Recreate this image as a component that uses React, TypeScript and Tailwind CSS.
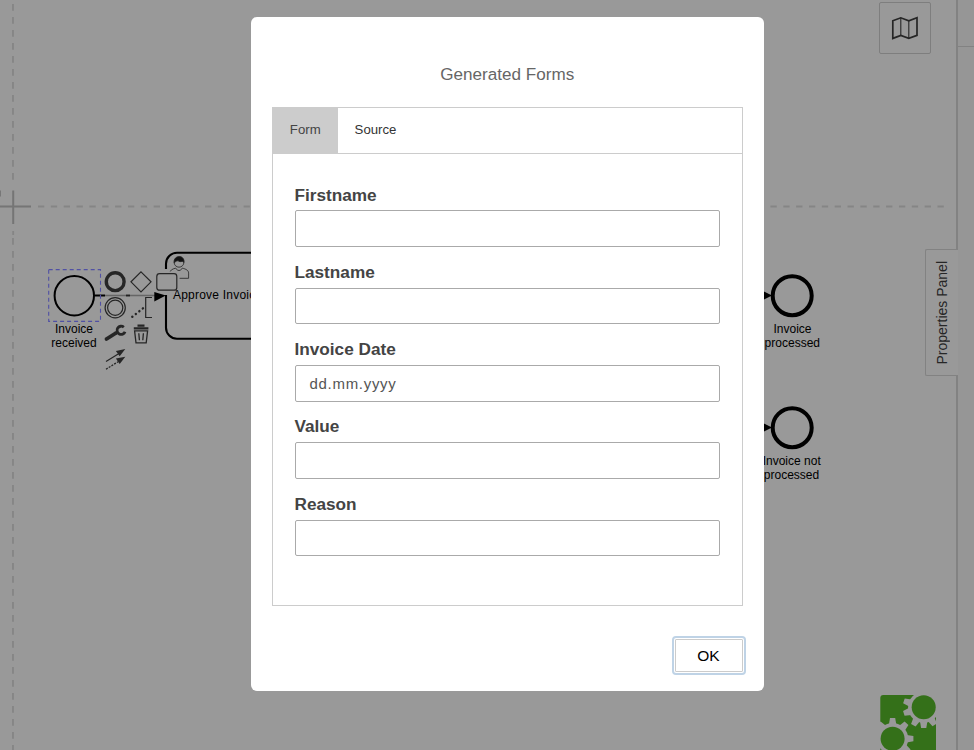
import React from "react";

const fields = [
  { label: "Firstname", value: "" },
  { label: "Lastname", value: "" },
  { label: "Invoice Date", value: "dd.mm.yyyy" },
  { label: "Value", value: "" },
  { label: "Reason", value: "" },
];

function ContextPad() {
  return (
    <g fill="none" stroke="#262626">
      <circle cx="115.2" cy="281.7" r="8.9" strokeWidth="3.4" />
      <path d="M141 271.8l10 10-10 10-10-10z" strokeWidth="1.2" />
      <rect x="156.8" y="273.6" width="20" height="16.6" rx="2.8" strokeWidth="1.2" />
      <circle cx="115.2" cy="307.7" r="10.1" strokeWidth="1.2" />
      <circle cx="115.2" cy="307.7" r="7.6" strokeWidth="1.2" />
      <path d="M152 297.5h-6.3v20h6.3" strokeWidth="1.2" />
      <path d="M132.3 316.8l10.8-8.6" strokeWidth="2.4" strokeLinecap="round" strokeDasharray="0.1 4.4" />
      <path d="M106.5 339l9.5-6" strokeWidth="3.8" strokeLinecap="round" />
      <path d="M123.8 327.2a4.1 4.1 0 1 0 1.2 4.5" strokeWidth="2.8" />
      <path d="M133.8 328.3h14.6M137.5 325.6h7" strokeWidth="2.2" />
      <path d="M134.6 330.8h13l-1.4 12h-10.2zM138.8 333.3l.6 7M143.4 333.3l-.6 7" strokeWidth="1.3" />
      <path d="M106 361.5l13-8" strokeWidth="1.3" />
      <path d="M106 369.2l13-8" strokeWidth="1.3" strokeDasharray="2 1.2" />
      <path d="M125.3 349l-9.4 1.9 3.8 5.4zM125.3 356.7l-9.4 1.9 3.8 5.4z" fill="#262626" stroke="none" />
    </g>
  );
}

function Diagram() {
  return (
    <svg className="absolute inset-0 h-[750px] w-[974px]" viewBox="0 0 974 750" fontFamily="Liberation Sans, Arial, sans-serif">
      <path d="M13 -9V750" fill="none" stroke="#858585" strokeWidth="1.8" strokeDasharray="6.8 6.2" />
      <path d="M38 206.5H948" fill="none" stroke="#858585" strokeWidth="1.8" strokeDasharray="6.3 6.55" />
      <path d="M13.2 185v50" stroke="#999" strokeWidth="4" />
      <path d="M13.2 231v4" stroke="#858585" strokeWidth="1.8" />
      <path d="M0 206.5h31M13.2 190.5v33.5" stroke="#757575" strokeWidth="2" />
      <path d="M0 190.5v6" stroke="#777" strokeWidth="2" />

      <rect x="166" y="252.7" width="128" height="86" rx="11" fill="none" stroke="#000" strokeWidth="2.1" />
      <path d="M164 269h4v26h-4z" fill="#999" />
      <path d="M95 295.5h10" stroke="#000" strokeWidth="2" />
      <path d="M105 295.5h50" stroke="#666" strokeWidth="1.6" />
      <path d="M126 295.5h4" stroke="#222" strokeWidth="1.8" />
      <path d="M154.3 292l11.5 3.5-11.5 6z" fill="#000" />
      <g fill="#999" stroke="#222" strokeWidth=".8">
        <path d="M170 279v-6.3c0-2.4 2.2-3.7 5.7-4.6l2 2.3h2.6l2-2.3c3.7 1 6.3 2.2 6.3 5v5.2h-9" />
        <circle cx="179" cy="262.3" r="4.9" />
        <path d="M174.3 262.8c-1.4-8.2 10.8-8.4 9.6-.4-1.4-2.2-3.8.2-5-1.2-1.5-1-3 0-4.6 1.6z" fill="#111" />
      </g>
      <rect x="155" y="271.5" width="23" height="19.5" rx="3" fill="#999" />
      <text x="173" y="299" fontSize="12" letterSpacing=".22">Approve Invoice</text>
      <path d="M171 288h5.5l-2 6.5h-3.5z" fill="#999" />
      <ContextPad />

      <circle cx="74.3" cy="295.7" r="19.7" fill="none" stroke="#000" strokeWidth="2" />
      <rect x="48.7" y="269.6" width="51.8" height="51.8" fill="none" stroke="#5050a4" strokeWidth="1.1" strokeDasharray="4 3" />
      <g fontSize="12" textAnchor="middle" fill="#000">
        <text x="74" y="333">Invoice</text>
        <text x="74" y="347">received</text>
        <text x="792.5" y="333">Invoice</text>
        <text x="792.3" y="347">processed</text>
        <text x="791.7" y="465">Invoice not</text>
        <text x="791.5" y="479">processed</text>
      </g>
      <g fill="none" stroke="#000" strokeWidth="4">
        <circle cx="792.2" cy="295.7" r="19.5" />
        <circle cx="792.2" cy="427.7" r="19.5" />
      </g>
      <path d="M760 289.5l12 6-12 6zM760 421.5l12 6-12 6z" />
    </svg>
  );
}

function MapIcon() {
  return (
    <svg className="h-6 w-7" viewBox="0 0 28 24" fill="none" stroke="#262626" strokeWidth="1.7">
      <path d="M1.8 4.8L9.8 1.8l8 3 8.2-3v17.6l-8.2 3-8-3-8 3z" />
      <path d="M9.8 1.8v17.6M17.8 4.8v17.6" strokeWidth="1.1" />
    </svg>
  );
}

const upperTeeth = [58, 90, 120, 163, 198];
const lowerTeeth = [-132, -90, -48, 0, 38];

function Gear({ x, y, teeth }: { x: number; y: number; teeth: number[] }) {
  return (
    <g transform={`translate(${x} ${y})`}>
      <circle r="15.6" fill="#999" />
      {teeth.map((angle) => (
        <path key={angle} d="M14-3.7L20.8-2.6v5.2L14 3.7z" transform={`rotate(${angle})`} fill="#999" />
      ))}
      <circle r="12" fill="#347019" />
    </g>
  );
}

function Logo() {
  return (
    <svg className="absolute left-[880px] top-[695px] h-[55px] w-[57px]" viewBox="0 0 57 55">
      <rect x=".3" y="0" width="55.7" height="60" rx="3" fill="#347019" />
      <path d="M44 0h13v12z" fill="#999" />
      <Gear x={43.7} y={12.3} teeth={upperTeeth} />
      <Gear x={12.6} y={43.7} teeth={lowerTeeth} />
    </svg>
  );
}

function GeneratedForms() {
  return (
    <section className="flex h-[673.5px] w-[513.5px] flex-col rounded-[6px] bg-white px-[21.5px] text-[#444]">
      <h1 className="mt-[46px] text-center text-[17.1px] leading-6 text-[#666]">Generated Forms</h1>
      <div className="mt-[20px] h-[499px] w-[471px] border border-[#ccc]">
        <nav className="flex h-[46px] border-b border-[#ccc] text-[13.2px]">
          <button className="w-[64.5px] bg-[#ccc] pb-px text-[#444]">Form</button>
          <button className="w-[76px] pb-px text-[#333]">Source</button>
        </nav>
        <form className="flex flex-col pl-[21.5px] pt-[29.6px]">
          {fields.map((field) => (
            <label key={field.label} className="flex h-[77.3px] flex-col text-[17.2px] font-bold leading-[22px]">
              {field.label}
              <span className="mt-[4.9px] flex h-[36.5px] w-[425.5px] items-center rounded-[2px] border border-[#aaa] px-[14px] pt-px text-[15px] font-normal tracking-[.7px] text-[#555]">
                {field.value}
              </span>
            </label>
          ))}
        </form>
      </div>
      <button className="mt-[33px] flex h-[33px] w-[68px] items-center justify-center self-end rounded-[1px] border border-[#ccc] text-[15.5px] text-black outline-2 outline-offset-1 outline-[#bfd3e6]">
        OK
      </button>
    </section>
  );
}

export default function App() {
  return (
    <main className="relative h-[750px] w-[974px] overflow-hidden bg-[#999] font-['Liberation_Sans',Arial,sans-serif]">
      <Diagram />
      <button className="absolute left-[879px] top-[2px] flex h-[52px] w-[52px] items-center justify-center rounded-[2px] border border-[#7e7e7e]">
        <MapIcon />
      </button>
      <Logo />
      <aside className="absolute right-0 top-0 h-full w-[18px] border-l-2 border-[#828282] bg-[#969696]">
        <div className="h-[47px] border-b border-[#828282]" />
      </aside>
      <div className="absolute left-[925px] top-[249px] flex h-[127px] w-[33px] items-center justify-center rounded-l-[2px] border border-r-0 border-[#828282] bg-[#999]">
        <span className="rotate-180 whitespace-nowrap text-[14px] leading-4 text-[#262626] [writing-mode:vertical-rl]">Properties Panel</span>
      </div>
      <div className="absolute left-[250.5px] top-[17px]">
        <GeneratedForms />
      </div>
    </main>
  );
}
